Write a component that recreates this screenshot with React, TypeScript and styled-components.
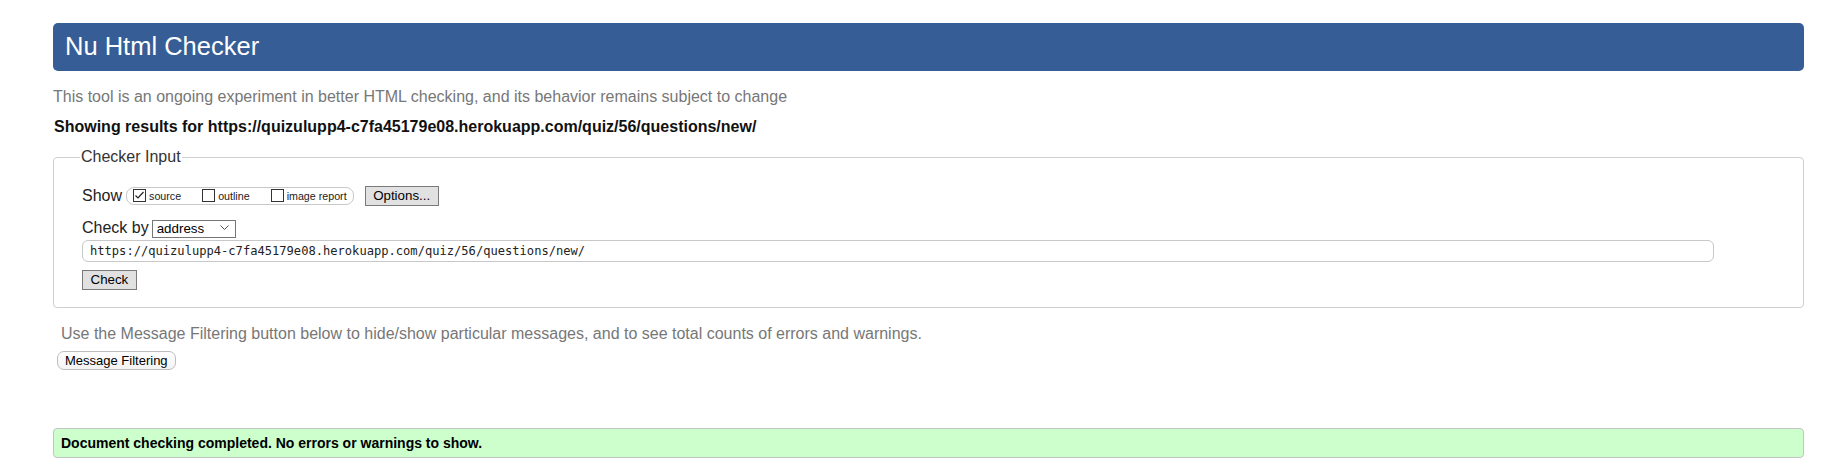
import React from "react";
import styled, { createGlobalStyle } from "styled-components";

const GlobalStyle = createGlobalStyle`
  html, body { margin: 0; padding: 0; background: #fff; }
  body { font-family: "Liberation Sans", Arial, sans-serif; color: #222; }
`;

const Page = styled.div`
  padding: 23px 44px 0 53px;
`;

const Header = styled.h1`
  margin: 0;
  height: 48px;
  box-sizing: border-box;
  display: flex;
  align-items: center;
  padding: 0 0 2px 12px;
  background: #365d95;
  color: #fff;
  border-radius: 5px;
  font-size: 25.5px;
  font-weight: normal;
`;

const Subtitle = styled.p`
  margin: 16px 0 0;
  font-size: 16px;
  line-height: 20px;
  color: #777;
`;

const ResultsFor = styled.p`
  margin: 10px 0 0 1px;
  font-size: 16px;
  line-height: 20px;
  font-weight: bold;
  color: #111;
`;

const Fieldset = styled.fieldset`
  margin: 11px 0 0;
  min-width: 0;
  border: 1px solid #cfcfcf;
  border-radius: 4px;
  padding: 19.5px 0 17px 28px;
`;

const Legend = styled.legend`
  font-size: 16px;
  color: #333;
  padding: 0 1px;
  margin-left: -2px;
`;

const Row = styled.div<{ $top?: number; $h: number }>`
  display: flex;
  align-items: center;
  height: ${(p) => p.$h}px;
  margin-top: ${(p) => p.$top ?? 0}px;
`;

const RowLabel = styled.span<{ $gap: number }>`
  font-size: 16px;
  color: #222;
  margin-right: ${(p) => p.$gap}px;
`;

const CheckGroup = styled.div`
  display: flex;
  align-items: center;
  height: 18px;
  box-sizing: border-box;
  border: 1px solid #c8c8c8;
  border-radius: 8px;
  padding: 0 6px;
  gap: 21px;
`;

const CheckItem = styled.label`
  display: flex;
  align-items: center;
  gap: 3px;
  font-size: 10.7px;
  color: #222;
`;

const Box = styled.span`
  width: 13px;
  height: 13px;
  box-sizing: border-box;
  border: 1px solid #333;
  background: #fff;
  display: inline-flex;
  align-items: center;
  justify-content: center;
`;

const GrayButton = styled.button<{ $ml?: number }>`
  height: 20px;
  box-sizing: border-box;
  margin-left: ${(p) => p.$ml ?? 0}px;
  padding: 0 7.5px;
  border: 1px solid #7a7a7a;
  border-radius: 0;
  background: #e1e1e1;
  color: #000;
  font-family: "Liberation Sans", Arial, sans-serif;
  font-size: 13.33px;
  line-height: 18px;
`;

const SelectWrap = styled.div`
  position: relative;
  width: 84px;
  height: 18px;
`;

const Select = styled.select`
  appearance: none;
  -webkit-appearance: none;
  width: 100%;
  height: 100%;
  box-sizing: border-box;
  margin: 0;
  border: 1px solid #767676;
  border-radius: 0;
  background: #fff;
  padding: 0 0 0 4px;
  font-family: "Liberation Sans", Arial, sans-serif;
  font-size: 13.33px;
  color: #000;
`;

const Chevron = styled.svg`
  position: absolute;
  right: 7px;
  top: 6px;
  pointer-events: none;
`;

const UrlInput = styled.input`
  display: block;
  margin-top: 3px;
  width: calc(100% - 89px);
  height: 22px;
  box-sizing: border-box;
  border: 1px solid #c8c8c8;
  border-radius: 6px;
  padding: 0 7px;
  font-family: "DejaVu Sans Mono", "Liberation Mono", monospace;
  font-size: 12.1px;
  color: #222;
  background: #fff;
  outline: none;
`;

const CheckRow = styled.div`
  margin-top: 8px;
  display: flex;
`;

const Hint = styled.p`
  margin: 15.5px 0 0 8px;
  font-size: 16px;
  line-height: 20px;
  color: #777;
`;

const PillButton = styled.button`
  display: block;
  margin: 7.5px 0 0 4px;
  height: 19px;
  box-sizing: border-box;
  padding: 0 7px;
  border: 1px solid #bdbdbd;
  border-radius: 7px;
  background: linear-gradient(#ffffff, #f3f3f3);
  color: #000;
  font-family: "Liberation Sans", Arial, sans-serif;
  font-size: 13px;
  line-height: 17px;
`;

const Success = styled.div`
  margin-top: 58px;
  height: 30px;
  box-sizing: border-box;
  display: flex;
  align-items: center;
  padding-left: 7px;
  background: #ccffcc;
  border: 1px solid #c4c4c4;
  border-radius: 4px;
  font-size: 14px;
  font-weight: bold;
  color: #000;
`;

const CheckMark = () => (
  <svg width="11" height="11" viewBox="0 0 11 11">
    <polyline points="1.5,5.5 4,8 9.5,2" fill="none" stroke="#222" strokeWidth="1.2" />
  </svg>
);

const Checkbox: React.FC<{ checked?: boolean; label: string }> = ({ checked, label }) => (
  <CheckItem>
    <Box>{checked && <CheckMark />}</Box>
    {label}
  </CheckItem>
);

const url = "https://quizulupp4-c7fa45179e08.herokuapp.com/quiz/56/questions/new/";

export default function App() {
  return (
    <>
      <GlobalStyle />
      <Page>
        <Header>Nu Html Checker</Header>
        <Subtitle>
          This tool is an ongoing experiment in better HTML checking, and its behavior remains subject to change
        </Subtitle>
        <ResultsFor>Showing results for {url}</ResultsFor>
        <Fieldset>
          <Legend>Checker Input</Legend>
          <Row $h={20}>
            <RowLabel $gap={4}>Show</RowLabel>
            <CheckGroup>
              <Checkbox checked label="source" />
              <Checkbox label="outline" />
              <Checkbox label="image report" />
            </CheckGroup>
            <GrayButton $ml={11}>Options...</GrayButton>
          </Row>
          <Row $h={18} $top={13.5}>
            <RowLabel $gap={3}>Check by</RowLabel>
            <SelectWrap>
              <Select defaultValue="address">
                <option value="address">address</option>
                <option value="file">file upload</option>
                <option value="text">text input</option>
              </Select>
              <Chevron width="9" height="6" viewBox="0 0 9 6">
                <polyline points="0.5,0.5 4.5,4.5 8.5,0.5" fill="none" stroke="#555" strokeWidth="1" />
              </Chevron>
            </SelectWrap>
          </Row>
          <UrlInput type="url" defaultValue={url} />
          <CheckRow>
            <GrayButton>Check</GrayButton>
          </CheckRow>
        </Fieldset>
        <Hint>
          Use the Message Filtering button below to hide/show particular messages, and to see total counts of errors and warnings.
        </Hint>
        <PillButton>Message Filtering</PillButton>
        <Success>Document checking completed. No errors or warnings to show.</Success>
      </Page>
    </>
  );
}
